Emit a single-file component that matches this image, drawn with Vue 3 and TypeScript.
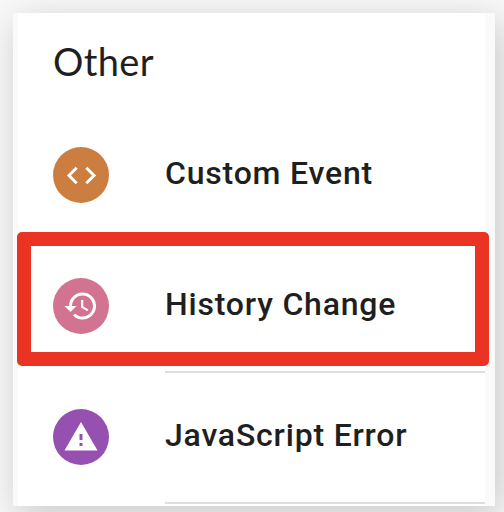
<script setup lang="ts">
type IconName = 'code' | 'history' | 'warning'

interface TriggerType {
  label: string
  icon: IconName
  selected?: boolean
}

const triggers: TriggerType[] = [
  { label: 'Custom Event', icon: 'code' },
  { label: 'History Change', icon: 'history', selected: true },
  { label: 'JavaScript Error', icon: 'warning' },
]

const paths: Record<IconName, string> = {
  code: 'M9.4 16.6 4.8 12l4.6-4.6L8 6l-6 6 6 6 1.4-1.4zm5.2 0 4.6-4.6-4.6-4.6L16 6l6 6-6 6-1.4-1.4z',
  history:
    'M13 3a9 9 0 0 0-9 9H1l3.89 3.89.07.14L9 12H6c0-3.87 3.13-7 7-7s7 3.13 7 7-3.13 7-7 7c-1.93 0-3.68-.79-4.94-2.06l-1.42 1.42A8.954 8.954 0 0 0 13 21a9 9 0 0 0 0-18zm-1 5v5l4.28 2.54.72-1.21-3.5-2.08V8H12z',
  warning: 'M1 21h22L12 2 1 21zm12-3h-2v-2h2v2zm0-4h-2v-4h2v4z',
}
</script>

<template>
  <main class="page">
    <section class="card">
      <h2 class="heading">Other</h2>
      <ul class="list">
        <li v-for="t in triggers" :key="t.label" class="row">
          <span class="badge" :class="t.icon">
            <svg viewBox="0 0 24 24" aria-hidden="true"><path :d="paths[t.icon]" /></svg>
          </span>
          <span class="label">{{ t.label }}</span>
          <span v-if="t.selected" class="highlight"></span>
        </li>
      </ul>
    </section>
  </main>
</template>

<style>
body {
  margin: 0;
}
</style>

<style scoped>
.page {
  box-sizing: border-box;
  width: 504px;
  height: 512px;
  padding: 13px 9px 6px 13px;
  overflow: hidden;
  background: #f8f8f8;
}
.card {
  box-sizing: border-box;
  height: 493px;
  border: solid #fafafa;
  border-width: 0 10px 0 5px;
  background: #fff;
  box-shadow: 5px 9px 36px rgba(0, 0, 0, 0.2);
  color: #1f1f1f;
}
.heading {
  box-sizing: border-box;
  height: 97px;
  margin: 0;
  padding: 23px 0 0 35px;
  font: 400 38px/50px Lato, sans-serif;
  letter-spacing: 0.4px;
}
.list {
  margin: 0;
  padding: 0;
  list-style: none;
}
.row {
  position: relative;
  box-sizing: border-box;
  display: flex;
  align-items: center;
  gap: 56px;
  height: 131px;
  padding: 0 0 1px 35px;
}
.row::after {
  content: '';
  position: absolute;
  left: 147px;
  right: 0;
  bottom: -1px;
  height: 2px;
  background: #dedede;
}
.row:first-child::after {
  display: none;
}
.badge {
  display: flex;
  align-items: center;
  justify-content: center;
  width: 56px;
  height: 56px;
  border-radius: 50%;
}
.badge svg {
  width: 36px;
  height: 36px;
  fill: #fff;
}
.badge.code {
  background: #cb7e40;
}
.badge.code svg {
  width: 35px;
  height: 35px;
}
.badge.history {
  background: #d27391;
}
.badge.warning {
  background: #9651b0;
}
.label {
  padding-bottom: 4px;
  font: 500 32px/40px Roboto, sans-serif;
  letter-spacing: 0.8px;
  white-space: nowrap;
}
.highlight {
  position: absolute;
  z-index: 1;
  top: -9px;
  left: -1px;
  right: -4px;
  box-sizing: border-box;
  height: 134px;
  border: 14px solid #ea3323;
  border-radius: 5px;
}
</style>
